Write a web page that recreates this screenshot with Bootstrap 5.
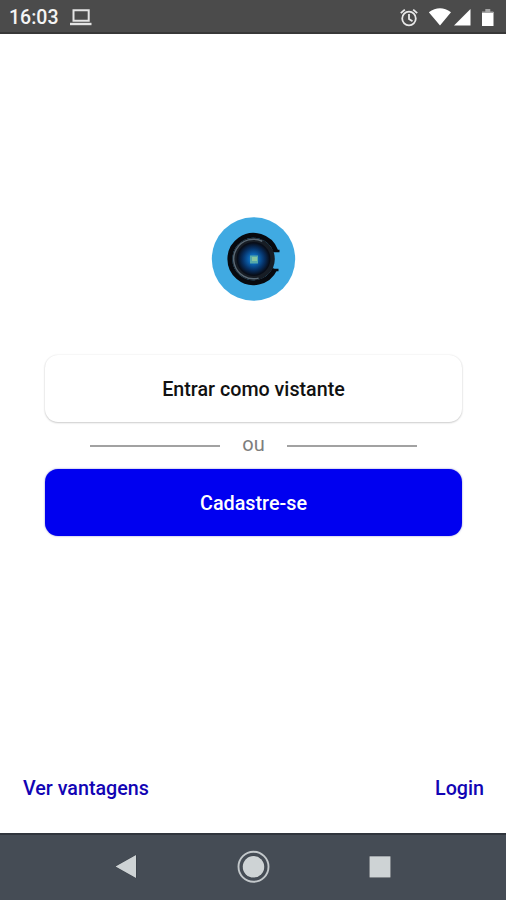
<!DOCTYPE html>
<html lang="pt-BR">
<head>
<meta charset="utf-8">
<meta name="viewport" content="width=device-width, initial-scale=1">
<title>Entrar</title>
<link href="https://cdn.jsdelivr.net/npm/bootstrap@5.3.0/dist/css/bootstrap.min.css" rel="stylesheet">
<style>
body{font-family:Roboto,"Liberation Sans",sans-serif;height:900px;overflow:hidden;background:#fff}
svg{display:block}
.status-bar{height:34px;background:#4b4b4b;border-bottom:2px solid #383838;padding-left:9px;color:#f4f4f4}
.clock{font-size:19.5px;font-weight:500;line-height:32px;padding-top:2px}
.brand-logo{margin-top:183px;margin-bottom:54px}
.actions{width:417px;margin-left:45px}
.action{height:67px;border-radius:13px;font-size:19.8px;font-weight:500;border:0;padding:2px 0 0}
.action-guest,.action-guest:hover{background:#fff;color:#111;font-size:19.7px;box-shadow:0 0 2px rgba(0,0,0,.1),0 1px 2px rgba(0,0,0,.18)}
.action-join,.action-join:hover{background:#0000f0;color:#fff;box-shadow:0 0 2px rgba(0,0,160,.5)}
.divider{height:47px;gap:22px;color:#7d7d7d;font-size:20px}
.divider-label{line-height:40px;padding-bottom:4px}
.divider-rule{width:130px;height:2px;background:#a2a2a2}
.foot-links{padding:0 22px 29px 23px;font-size:19.7px;font-weight:500;line-height:30px}
.foot-links a{color:#1204b4}
.nav-keys{height:67px;background:#454c55;border-top:2px solid #30353d}
</style>
</head>
<body class="d-flex flex-column">
<header class="status-bar d-flex flex-shrink-0">
  <span class="clock">16:03</span>
  <svg class="ms-auto order-2" width="106" height="32" viewBox="400 0 106 32">
    <g fill="none" stroke="#e8e8e8" stroke-width="1.8"><circle cx="409" cy="18.500" r="6.800"/><path d="M409 14v5l3.500 2.300M400.800 13.200l4-3.600M417.200 13.200l-4-3.600"/></g>
    <path fill="#fff" d="M428.800 12.200Q440 4.400 451 12.200L440 25.500zM454 25.500L470.500 9v16.500zM482 12h11.500v14H482z"/>
    <path fill="#a5a5a5" d="M485.300 9h5v2.500h3V13H482v-1.500h3.300z"/>
  </svg>
  <svg class="ms-2" width="28" height="32" viewBox="67 0 28 32">
    <path d="M74.500 10.300h15.200v10.400H74.500z" fill="none" stroke="#e4e4e4" stroke-width="2"/><path fill="#e4e4e4" d="M71 22.800h21.500v2.400H71z"/>
  </svg>
</header>
<main class="flex-grow-1 d-flex flex-column">
  <div class="brand-logo">
    <svg width="506" height="84" viewBox="0 217 506 84" role="img" aria-label="Logo">
      <defs>
        <radialGradient id="lens"><stop offset="0" stop-color="#2590d4"/><stop offset=".3" stop-color="#0b62b0"/><stop offset=".65" stop-color="#062f62"/><stop offset=".95" stop-color="#080d18"/></radialGradient>
      </defs>
      <circle cx="253.500" cy="259" r="41.700" fill="#40aae2"/>
      <path d="M275.600 250.700A23.600 23.600 0 1 0 274.800 269.200" fill="none" stroke="#07090e" stroke-width="5"/>
      <path d="M272 251h7.500M272 270h6.500" stroke="#07090e" stroke-width="2.500"/>
      <circle cx="253.500" cy="259" r="21.300" fill="#171d25"/>
      <circle cx="253.500" cy="259" r="19.800" fill="none" stroke="#5a6975" stroke-width="1.500" stroke-dasharray="76 49" transform="rotate(75 253.500 259)"/>
      <circle cx="253.500" cy="259" r="17" fill="url(#lens)"/>
      <path d="M250 255.500h8v8h-8z" fill="#55a8a9"/><path d="M252 257h5v4h-5z" fill="#86c4a0"/>
    </svg>
  </div>
  <div class="actions d-grid">
    <button class="btn action action-guest" type="button">Entrar como vistante</button>
    <div class="divider d-flex align-items-center justify-content-center">
      <span class="divider-rule"></span><span class="divider-label">ou</span><span class="divider-rule"></span>
    </div>
    <button class="btn action action-join" type="button">Cadastre-se</button>
  </div>
  <div class="foot-links d-flex justify-content-between mt-auto">
    <a class="text-decoration-none" href="#">Ver vantagens</a><a class="text-decoration-none" href="#">Login</a>
  </div>
</main>
<nav class="nav-keys flex-shrink-0" aria-label="Sistema">
  <svg width="506" height="65" viewBox="0 835 506 65">
    <g fill="#ced3d5" stroke="#343a42" stroke-width="1" paint-order="stroke">
      <path d="M115.500 866.500L136 855v23z"/><path d="M369.500 856.300h21V877.500h-21z"/><circle cx="253.500" cy="866.800" r="10.800"/>
    </g>
    <circle cx="253.500" cy="866.800" r="15" fill="none" stroke="#c3c8cb" stroke-width="1.900"/>
  </svg>
</nav>
<script src="https://cdn.jsdelivr.net/npm/bootstrap@5.3.0/dist/js/bootstrap.bundle.min.js"></script>
</body>
</html>
